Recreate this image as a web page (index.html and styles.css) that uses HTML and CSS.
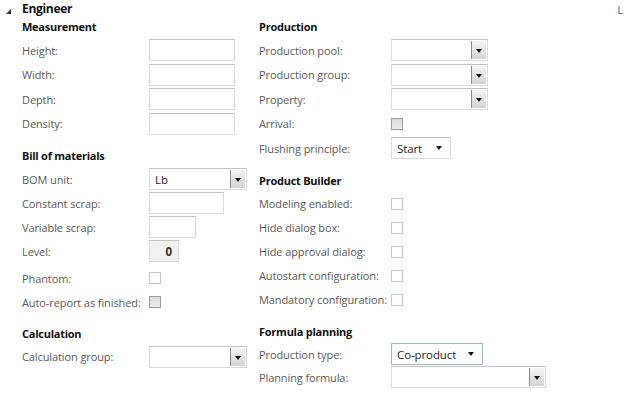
FILE: index.html
```html
<!DOCTYPE html>
<html>
<head>
    <title>Engineer</title>
    <link rel="stylesheet" href="styles.css">
</head>
<body>
    <div class="group-head">
        <svg class="collapse" width="5" height="5" viewBox="0 0 5 5"><polygon points="5,0 5,5 0,5" fill="#333"/></svg>
        <span class="group-title">Engineer</span>
        <a class="side-link" href="#">L</a>
    </div>

    <div class="columns">
        <!-- left column -->
        <div class="col col-left">
            <div class="section first">
                <h3>Measurement</h3>
                <div class="row"><label>Height:</label><span class="field w86"></span></div>
                <div class="row"><label>Width:</label><span class="field w86"></span></div>
                <div class="row"><label>Depth:</label><span class="field w86"></span></div>
                <div class="row"><label>Density:</label><span class="field w86"></span></div>
            </div>
            <div class="section">
                <h3>Bill of materials</h3>
                <div class="row"><label>BOM unit:</label><span class="field lookup w98"><span class="val">Lb</span><span class="lookup-btn"></span></span></div>
                <div class="row"><label>Constant scrap:</label><span class="field w75"></span></div>
                <div class="row"><label>Variable scrap:</label><span class="field w47"></span></div>
                <div class="row"><label>Level:</label><span class="field readonly w30">0</span></div>
                <div class="row gap"><label>Phantom:</label><span class="check"></span></div>
                <div class="row"><label>Auto-report as finished:</label><span class="check on"></span></div>
            </div>
            <div class="section last">
                <h3>Calculation</h3>
                <div class="row"><label>Calculation group:</label><span class="field lookup w98"><span class="val"></span><span class="lookup-btn"></span></span></div>
            </div>
        </div>

        <!-- right column -->
        <div class="col col-right">
            <div class="section first">
                <h3>Production</h3>
                <div class="row"><label>Production pool:</label><span class="field lookup w97"><span class="val"></span><span class="lookup-btn"></span></span></div>
                <div class="row"><label>Production group:</label><span class="field lookup w97"><span class="val"></span><span class="lookup-btn"></span></span></div>
                <div class="row"><label>Property:</label><span class="field lookup w97"><span class="val"></span><span class="lookup-btn"></span></span></div>
                <div class="row"><label>Arrival:</label><span class="check on"></span></div>
                <div class="row"><label>Flushing principle:</label><span class="field select w60"><span class="val">Start</span><span class="caret"></span></span></div>
            </div>
            <div class="section">
                <h3>Product Builder</h3>
                <div class="row"><label>Modeling enabled:</label><span class="check"></span></div>
                <div class="row"><label>Hide dialog box:</label><span class="check"></span></div>
                <div class="row"><label>Hide approval dialog:</label><span class="check"></span></div>
                <div class="row"><label>Autostart configuration:</label><span class="check"></span></div>
                <div class="row"><label>Mandatory configuration:</label><span class="check"></span></div>
            </div>
            <div class="section last">
                <h3>Formula planning</h3>
                <div class="row"><label>Production type:</label><span class="field select focus w92"><span class="val">Co-product</span><span class="caret"></span></span></div>
                <div class="row"><label>Planning formula:</label><span class="field lookup w155"><span class="val"></span><span class="lookup-btn"></span></span></div>
            </div>
        </div>
    </div>
</body>
</html>
```

FILE: styles.css
```css
body { margin: 0; background: #fff; font-family: "Open Sans", sans-serif; font-size: 11px; letter-spacing: -0.1px; color: #595959; width: 624px; height: 396px; overflow: hidden; }

.group-head { height: 16px; display: flex; align-items: center; padding-left: 6px; padding-top: 2px; box-sizing: border-box; position: relative; }
.collapse { margin-top: 4px; margin-right: 11px; }
.group-title { font-weight: bold; font-size: 12px; letter-spacing: -0.3px; color: #111; line-height: 14px; }
.side-link { position: absolute; right: 1px; top: 2px; color: #3b6aa8; text-decoration: none; font-size: 11px; }

.columns { display: grid; grid-template-columns: 237px 1fr; padding-left: 22px; }

.section { display: flex; flex-direction: column; margin-top: 9px; }
.section.first { margin-top: 0; }
.section h3 { margin: 0; height: 22px; line-height: 22px; font-size: 11px; letter-spacing: -0.25px; font-weight: bold; color: #111; }

.row { display: flex; align-items: center; height: 24px; }
.section.first .row { height: 24.5px; }
.section.last .row { height: 23px; }
.row.gap { height: 27px; padding-top: 3px; box-sizing: border-box; }
.row label { flex: none; white-space: nowrap; }
.col-left .row label { width: 127px; }
.col-right .row label { width: 132px; }

.field { box-sizing: border-box; height: 22px; border: 1px solid #dadada; border-top-color: #c2c2c2; background: #fff; display: flex; align-items: center; color: #1e1e1e; font-size: 11.5px; padding: 0 5px; }
.w86 { width: 86px; }
.w75 { width: 75px; }
.w47 { width: 47px; }
.w30 { width: 30px; }
.w60 { width: 60px; }
.w92 { width: 92px; }
.w97 { width: 97px; }
.w98 { width: 98px; }
.w155 { width: 155px; }

.readonly { background: #f2f2f2; justify-content: flex-end; font-weight: bold; color: #333; padding-right: 6px; }

.lookup { padding: 0 0 0 5px; }
.lookup .val { flex: 1; }
.lookup-btn { align-self: stretch; width: 14px; margin: 1px; border-left: 1px solid #8a8a8a; background: linear-gradient(#f4f4f4, #d4d4d4); position: relative; }
.lookup-btn::after { content: ""; position: absolute; left: 4px; top: 8px; border-left: 3px solid transparent; border-right: 3px solid transparent; border-top: 4px solid #111; }

.select .val { flex: 1; }
.select.focus { border-color: #9fb3cc; }
.caret { width: 0; height: 0; border-left: 3.5px solid transparent; border-right: 3.5px solid transparent; border-top: 4px solid #111; margin-right: 3px; }

.check { box-sizing: border-box; width: 12px; height: 12px; border: 1px solid #c4c4c4; background: #fff; }
.check.on { border-color: #9a9a9a; background: linear-gradient(#dcdcdc, #ececec); }
```
